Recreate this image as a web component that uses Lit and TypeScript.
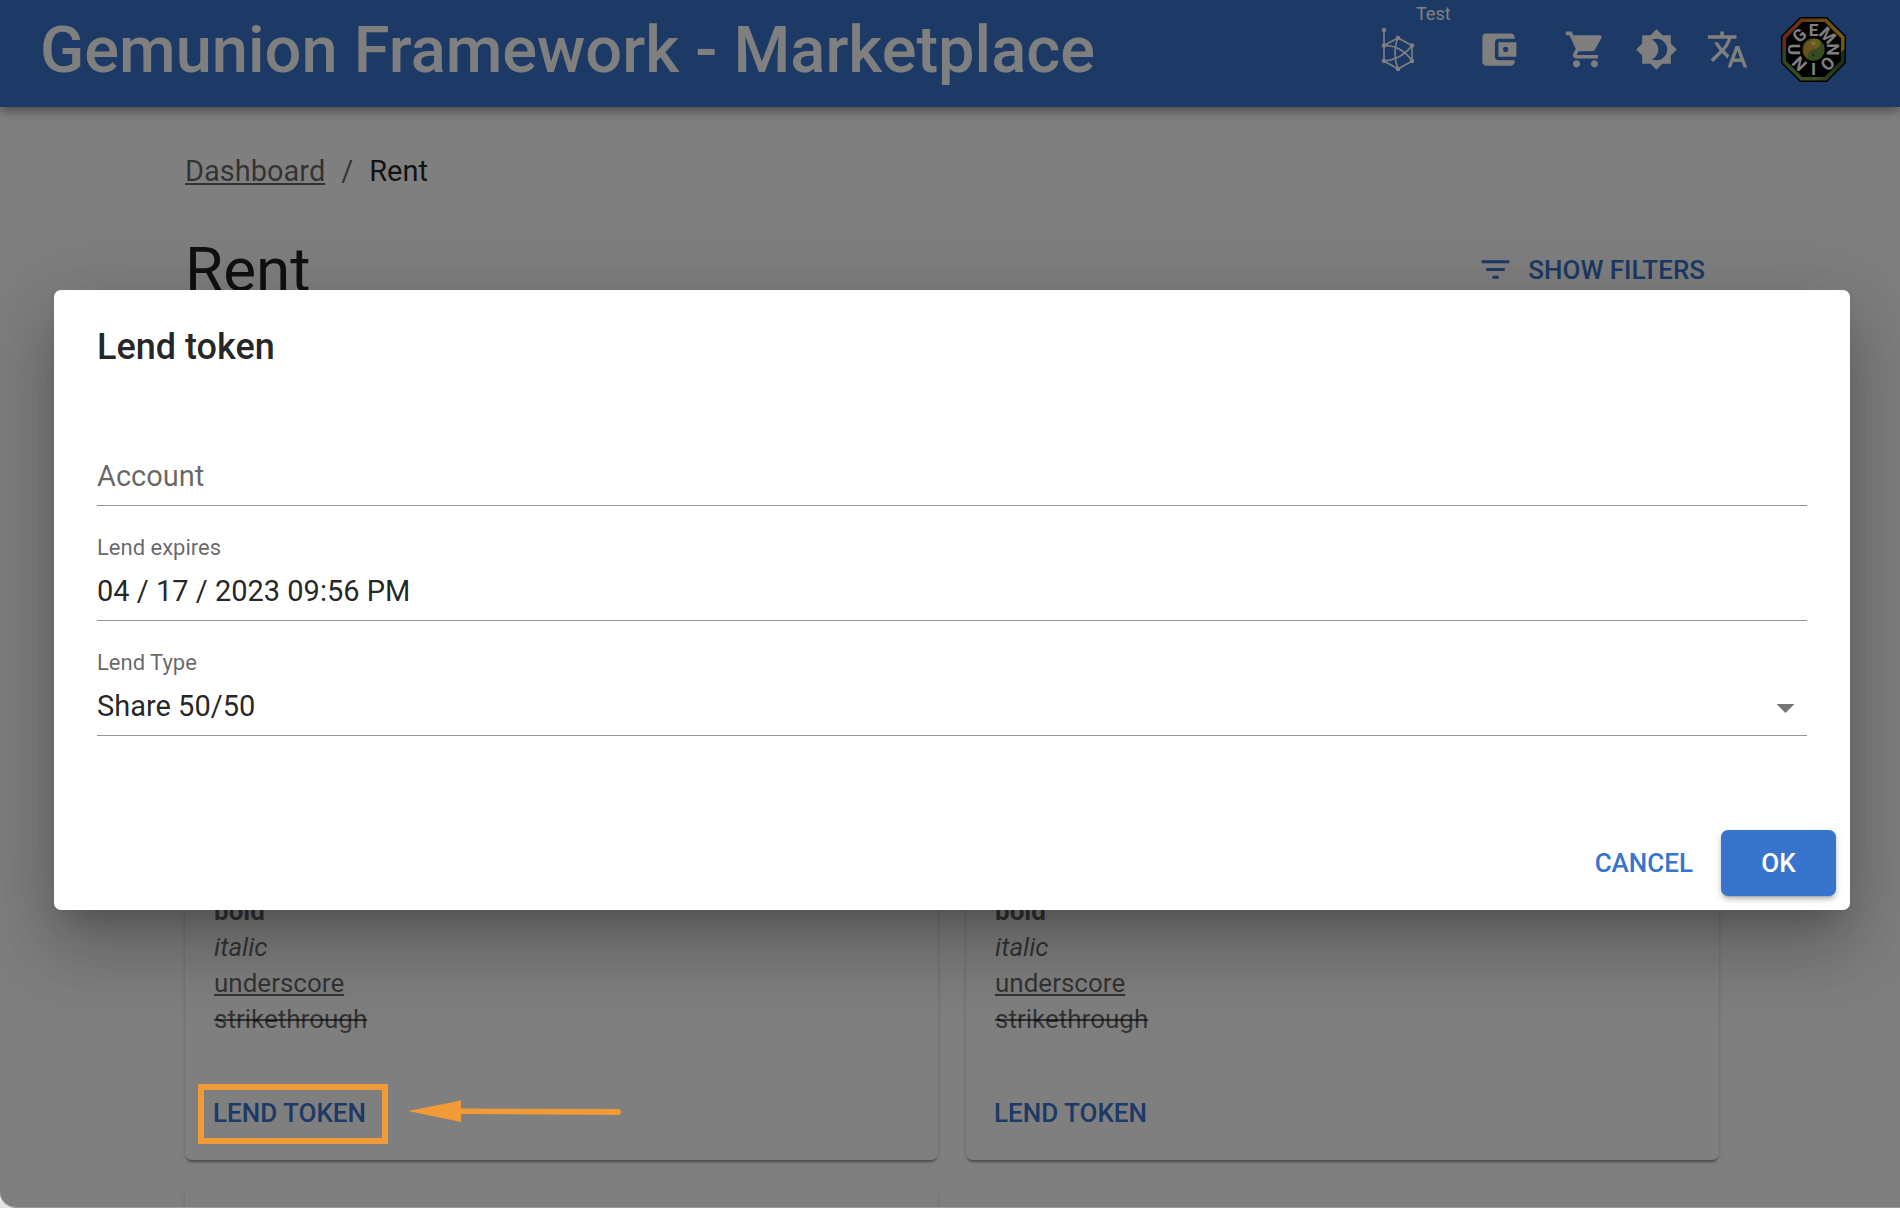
import { LitElement, html, svg, css, nothing } from "lit";
import { customElement, property } from "lit/decorators.js";

const icons: Record<string, string> = {
  wallet:
    "M21 18v1c0 1.1-.9 2-2 2H5c-1.11 0-2-.9-2-2V5c0-1.1.89-2 2-2h14c1.1 0 2 .9 2 2v1h-9c-1.11 0-2 .9-2 2v8c0 1.1.89 2 2 2h9zm-9-2h10V8H12v8zm4-2.5c-.83 0-1.5-.67-1.5-1.5s.67-1.5 1.5-1.5 1.5.67 1.5 1.5-.67 1.5-1.5 1.5z",
  cart: "M7 18c-1.1 0-1.99.9-1.99 2S5.9 22 7 22s2-.9 2-2-.9-2-2-2zM1 2v2h2l3.6 7.59-1.35 2.45c-.16.28-.25.61-.25.96 0 1.1.9 2 2 2h12v-2H7.42c-.14 0-.25-.11-.25-.25l.03-.12.9-1.63h7.45c.75 0 1.41-.41 1.75-1.03l3.58-6.49c.08-.14.12-.31.12-.48 0-.55-.45-1-1-1H5.21l-.94-2H1zm16 16c-1.1 0-1.99.9-1.99 2s.89 2 1.99 2 2-.9 2-2-.9-2-2-2z",
  theme:
    "M20 8.69V4h-4.69L12 .69 8.69 4H4v4.69L.69 12 4 15.31V20h4.69L12 23.31 15.31 20H20v-4.69L23.31 12 20 8.69zM12 18c-.89 0-1.74-.2-2.5-.55C11.56 16.5 13 14.42 13 12s-1.44-4.5-3.5-5.45C10.26 6.2 11.11 6 12 6c3.31 0 6 2.69 6 6s-2.69 6-6 6z",
  language:
    "M12.87 15.07l-2.54-2.51.03-.03c1.74-1.94 2.98-4.17 3.71-6.53H17V4h-7V2H8v2H1v1.99h11.17C11.5 7.92 10.44 9.75 9 11.35 8.07 10.32 7.3 9.19 6.69 8h-2c.73 1.63 1.73 3.17 2.98 4.56l-5.09 5.02L4 19l5-5 3.11 3.11.76-2.04zM18.5 10h-2L12 22h2l1.12-3h4.75L21 22h2l-4.5-12zm-2.62 7l1.62-4.33L19.12 17h-3.24z",
  filter: "M10 18h4v-2h-4v2zM3 6v2h18V6H3zm3 7h12v-2H6v2z",
  dropdown: "M7 10l5 5 5-5z",
};

const icon = (name: string) =>
  html`<svg class="icon" viewBox="0 0 24 24" aria-hidden="true"><path d=${icons[name]}></path></svg>`;

const networkIcon = html`
  <svg class="network-icon" viewBox="0 0 36 44" aria-hidden="true">
    <g fill="none" stroke="currentColor" stroke-width="1.6">
      <path d="M4 3V34L18 42L32 34V18.500L18 11L4 18.500"></path>
      <path d="M4 18.500C14 18 25 23 32 34"></path>
      <path d="M4 34C15 33 25 28 32 18.500"></path>
      <path d="M18 11C14 20 14 32 18 42"></path>
    </g>
    <g fill="currentColor">
      <circle cx="4" cy="3" r="2.200"></circle>
      <circle cx="4" cy="18.500" r="2.200"></circle>
      <circle cx="4" cy="34" r="2.200"></circle>
      <circle cx="18" cy="11" r="2.200"></circle>
      <circle cx="18" cy="42" r="2.200"></circle>
      <circle cx="32" cy="18.500" r="2.200"></circle>
      <circle cx="32" cy="34" r="2.200"></circle>
    </g>
  </svg>
`;

/* GEM runs clockwise over the top, UNION counter-clockwise below. */
const ring = [
  { letter: "G", x: 18, y: 18, turn: -45 },
  { letter: "E", x: 32, y: 13, turn: 0 },
  { letter: "M", x: 46, y: 18, turn: 45 },
  { letter: "U", x: 13, y: 32, turn: 90 },
  { letter: "N", x: 18, y: 46, turn: 45 },
  { letter: "I", x: 32, y: 51, turn: 0 },
  { letter: "O", x: 46, y: 46, turn: -45 },
  { letter: "N", x: 51, y: 32, turn: -90 },
];

const avatar = html`
  <svg class="avatar" viewBox="0 0 64 64" role="img" aria-label="Profile">
    <defs>
      <linearGradient id="warm" x1="0" y1="0.500" x2="1" y2="0.300">
        <stop offset="0" stop-color="#d8502c"></stop>
        <stop offset="0.550" stop-color="#c9802f"></stop>
        <stop offset="1" stop-color="#e6c52a"></stop>
      </linearGradient>
      <linearGradient id="green" x1="0" y1="0" x2="1" y2="0">
        <stop offset="0" stop-color="#5c8a3c"></stop>
        <stop offset="0.500" stop-color="#86a04a"></stop>
        <stop offset="1" stop-color="#2c5a2c"></stop>
      </linearGradient>
      <linearGradient id="sun" x1="0" y1="1" x2="1" y2="0">
        <stop offset="0" stop-color="#d98a34"></stop>
        <stop offset="1" stop-color="#d8c63c"></stop>
      </linearGradient>
    </defs>
    <path d="M19 0.700H45L63.300 19V45L45 63.300H19L0.700 45V19Z" fill="url(#green)"></path>
    <path d="M0.700 35V19L19 0.700H45L63.300 19V31L58 36L32 32L5 30Z" fill="url(#warm)"></path>
    <path d="M21 5H43L59 21V43L43 59H21L5 43V21Z" fill="#000"></path>
    <path d="M19 0.700H45L63.300 19V45L45 63.300H19L0.700 45V19Z" fill="none" stroke="#000" stroke-width="1.400"></path>
    <circle cx="32" cy="32" r="11" fill="#6f9440"></circle>
    <path d="M38 22.800A11 11 0 0 0 27 41.800C25 35 29 32.500 33 31.500C38 30 40 27 38 22.800Z" fill="url(#sun)"></path>
    <circle cx="32" cy="26" r="1.800" fill="#f6ee90"></circle>
    <circle cx="32" cy="37.500" r="1.500" fill="#3c5f2a"></circle>
    ${ring.map(
      (r) => svg`<text class="ring-letter" x=${r.x} y=${r.y + 6} transform=${`rotate(${r.turn} ${r.x} ${r.y})`}
        text-anchor="middle">${r.letter}</text>`,
    )}
  </svg>
`;

const buttonStyles = css`
  button {
    display: inline-flex;
    align-items: center;
    justify-content: center;
    margin: 0;
    padding: 11px 14px;
    border: 0;
    border-radius: 7px;
    background: none;
    color: #3874cb;
    font: 500 26px/44px Roboto, "Liberation Sans", sans-serif;
    text-transform: uppercase;
    cursor: pointer;
  }
  .icon {
    width: 43px;
    height: 43px;
    fill: currentColor;
    flex: none;
  }
`;

@customElement("top-bar")
class TopBar extends LitElement {
  static styles = [
    buttonStyles,
    css`
      :host {
        display: flex;
        align-items: flex-start;
        justify-content: space-between;
        padding: 0 40px 7px;
        background: #3874cb;
        color: #fff;
        box-shadow: 0 4px 7px -2px rgba(0, 0, 0, 0.2), 0 7px 9px 0 rgba(0, 0, 0, 0.14),
          0 2px 18px 0 rgba(0, 0, 0, 0.12);
        z-index: 1;
      }
      .title {
        color: inherit;
        text-decoration: none;
        font-size: 65px;
        font-weight: 500;
        line-height: 100px;
        white-space: nowrap;
      }
      .actions {
        display: flex;
        align-items: center;
        height: 98px;
      }
      button {
        padding: 14px;
        color: inherit;
      }
      .network {
        position: relative;
        margin-right: 33px;
      }
      .wallet {
        margin-right: 16px;
      }
      .network-icon {
        width: 36px;
        height: 44px;
      }
      .badge {
        position: absolute;
        top: -11px;
        left: 50px;
        font-size: 18px;
        font-weight: 400;
        line-height: 24px;
        text-transform: none;
      }
      .avatar {
        width: 65px;
        height: 65px;
        margin-left: 4px;
      }
      .ring-letter {
        font-size: 17px;
        font-weight: 700;
        fill: #fff;
      }
    `,
  ];

  render() {
    return html`
      <a class="title" href="#">Gemunion Framework - Marketplace</a>
      <div class="actions">
        <button class="network" aria-label="Network">${networkIcon}<span class="badge">Test</span></button>
        <button class="wallet" aria-label="Wallet">${icon("wallet")}</button>
        <button aria-label="Cart">${icon("cart")}</button>
        <button aria-label="Theme">${icon("theme")}</button>
        <button aria-label="Language">${icon("language")}</button>
        <button aria-label="Account">${avatar}</button>
      </div>
    `;
  }
}

@customElement("token-card")
class TokenCard extends LitElement {
  @property({ type: Boolean }) blank = false;

  static styles = [
    buttonStyles,
    css`
      :host {
        display: flex;
        flex-direction: column;
        justify-content: flex-end;
        min-height: 825px;
        border-radius: 7px;
        background: #fff;
        box-shadow: 0 4px 2px -2px rgba(0, 0, 0, 0.2), 0 2px 2px 0 rgba(0, 0, 0, 0.14),
          0 2px 5px 0 rgba(0, 0, 0, 0.12);
      }
      .text {
        padding: 29px 29px 43px;
        color: rgba(0, 0, 0, 0.6);
        font-size: 26px;
        line-height: 36px;
      }
      .line {
        display: block;
      }
      .actions {
        padding: 0 14px 14px;
      }
    `,
  ];

  render() {
    if (this.blank) return nothing;
    return html`
      <div class="text">
        <strong class="line">bold</strong>
        <em class="line">italic</em>
        <span class="line"><u>underscore</u></span>
        <span class="line"><s>strikethrough</s></span>
      </div>
      <div class="actions"><button>Lend token</button></div>
    `;
  }
}

@customElement("lend-dialog")
class LendDialog extends LitElement {
  @property() expires = "04 / 17 / 2023 09:56 PM";

  static styles = [
    buttonStyles,
    css`
      :host {
        display: block;
        width: calc(100% - 100px);
        border-radius: 7px;
        background: #fff;
        color: rgba(0, 0, 0, 0.87);
        box-shadow: 0 20px 27px -13px rgba(0, 0, 0, 0.2), 0 43px 68px 5px rgba(0, 0, 0, 0.14),
          0 16px 83px 14px rgba(0, 0, 0, 0.12);
      }
      h2 {
        margin: 0;
        padding: 28px 43px 15px;
        font-size: 36px;
        font-weight: 500;
        line-height: 58px;
      }
      .fields {
        padding: 0 43px 80px;
      }
      .field {
        display: grid;
        grid-template-rows: 32px 57px;
        padding-top: 26px;
      }
      label {
        grid-area: 1 / 1;
        color: rgba(0, 0, 0, 0.6);
        font-size: 22px;
        line-height: 32px;
      }
      .empty label {
        grid-area: 2 / 1;
        padding-top: 7px;
        font-size: 29px;
        line-height: 41px;
        pointer-events: none;
      }
      input,
      select {
        grid-area: 2 / 1;
        box-sizing: border-box;
        width: 100%;
        margin: 0;
        padding: 7px 0 8px;
        border: 0;
        border-bottom: 1px solid rgba(0, 0, 0, 0.42);
        border-radius: 0;
        outline: 0;
        background: transparent;
        color: inherit;
        font: 400 29px/41px Roboto, "Liberation Sans", sans-serif;
        appearance: none;
      }
      .field .icon {
        grid-area: 2 / 1;
        justify-self: end;
        margin-top: 7px;
        color: rgba(0, 0, 0, 0.54);
        pointer-events: none;
      }
      .actions {
        display: flex;
        justify-content: flex-end;
        gap: 14px;
        padding: 14px;
      }
      .primary {
        min-width: 115px;
        background: #3874cb;
        color: #fff;
        box-shadow: 0 5px 2px -4px rgba(0, 0, 0, 0.2), 0 4px 4px 0 rgba(0, 0, 0, 0.14),
          0 2px 9px 0 rgba(0, 0, 0, 0.12);
      }
    `,
  ];

  render() {
    return html`
      <section role="dialog" aria-labelledby="heading">
        <h2 id="heading">Lend token</h2>
        <div class="fields">
          <div class="field empty">
            <label for="account">Account</label>
            <input id="account" type="text" />
          </div>
          <div class="field">
            <label for="expires">Lend expires</label>
            <input id="expires" type="text" .value=${this.expires} />
          </div>
          <div class="field">
            <label for="type">Lend Type</label>
            <select id="type">
              <option>Share 50/50</option>
            </select>
            ${icon("dropdown")}
          </div>
        </div>
        <div class="actions">
          <button>Cancel</button>
          <button class="primary">Ok</button>
        </div>
      </section>
    `;
  }
}

@customElement("app-root")
class AppRoot extends LitElement {
  static styles = [
    buttonStyles,
    css`
      :host {
        display: block;
        height: 100vh;
        overflow: hidden;
        background: #e4e4e4;
        font-family: Roboto, "Liberation Sans", sans-serif;
      }
      .window {
        position: relative;
        display: flex;
        flex-direction: column;
        box-sizing: border-box;
        height: 100%;
        overflow: hidden;
        border-bottom: 1px solid #9a9a9a;
        border-radius: 0 0 0 16px;
        background: #fff;
      }
      top-bar {
        flex: none;
      }
      .scroller {
        padding: 44px 0 0 4px;
      }
      main {
        box-sizing: border-box;
        max-width: 1534px;
        margin: 0 auto;
        color: rgba(0, 0, 0, 0.87);
      }
      .crumbs {
        display: flex;
        gap: 16px;
        color: rgba(0, 0, 0, 0.6);
        font-size: 29px;
        line-height: 41px;
      }
      .crumbs a {
        color: inherit;
      }
      .current {
        color: rgba(0, 0, 0, 0.87);
      }
      .heading {
        display: flex;
        align-items: center;
        justify-content: space-between;
        padding: 40px 0 28px;
      }
      h1 {
        margin: 0;
        font-size: 62px;
        font-weight: 400;
        line-height: 75px;
      }
      .filters {
        gap: 14px;
      }
      .filters .icon {
        width: 37px;
        height: 37px;
      }
      .cards {
        display: grid;
        grid-template-columns: 1fr 1fr;
        gap: 28px;
      }
      .backdrop {
        position: absolute;
        inset: 0;
        display: flex;
        align-items: center;
        justify-content: center;
        padding: 0 0 8px 4px;
        background: rgba(0, 0, 0, 0.5);
        z-index: 2;
      }
      .callout {
        position: absolute;
        top: 1084px;
        left: 198px;
        box-sizing: border-box;
        width: 190px;
        height: 60px;
        border: 6px solid #f19a38;
        z-index: 3;
        pointer-events: none;
      }
      .arrow {
        position: absolute;
        top: 1100px;
        left: 408px;
        width: 214px;
        height: 22px;
        fill: #f19a38;
        z-index: 3;
        pointer-events: none;
      }
      .backdrop lend-dialog {
        flex: none;
      }
    `,
  ];

  render() {
    return html`
      <div class="window">
        <top-bar></top-bar>
        <div class="scroller">
          <main>
            <nav class="crumbs" aria-label="Breadcrumb">
              <a href="#">Dashboard</a><span>/</span><span class="current">Rent</span>
            </nav>
            <div class="heading">
              <h1>Rent</h1>
              <button class="filters">${icon("filter")}Show filters</button>
            </div>
            <div class="cards">
              <token-card></token-card>
              <token-card></token-card>
              <token-card blank></token-card>
            </div>
          </main>
        </div>
        <div class="backdrop"><lend-dialog></lend-dialog></div>
        <div class="callout"></div>
        <svg class="arrow" viewBox="0 0 214 22" aria-hidden="true">
          <path d="M0 11L53 0.500V8.500L210 9Q213 9 213 12T210 15L53 14V22Z"></path>
        </svg>
      </div>
    `;
  }
}
